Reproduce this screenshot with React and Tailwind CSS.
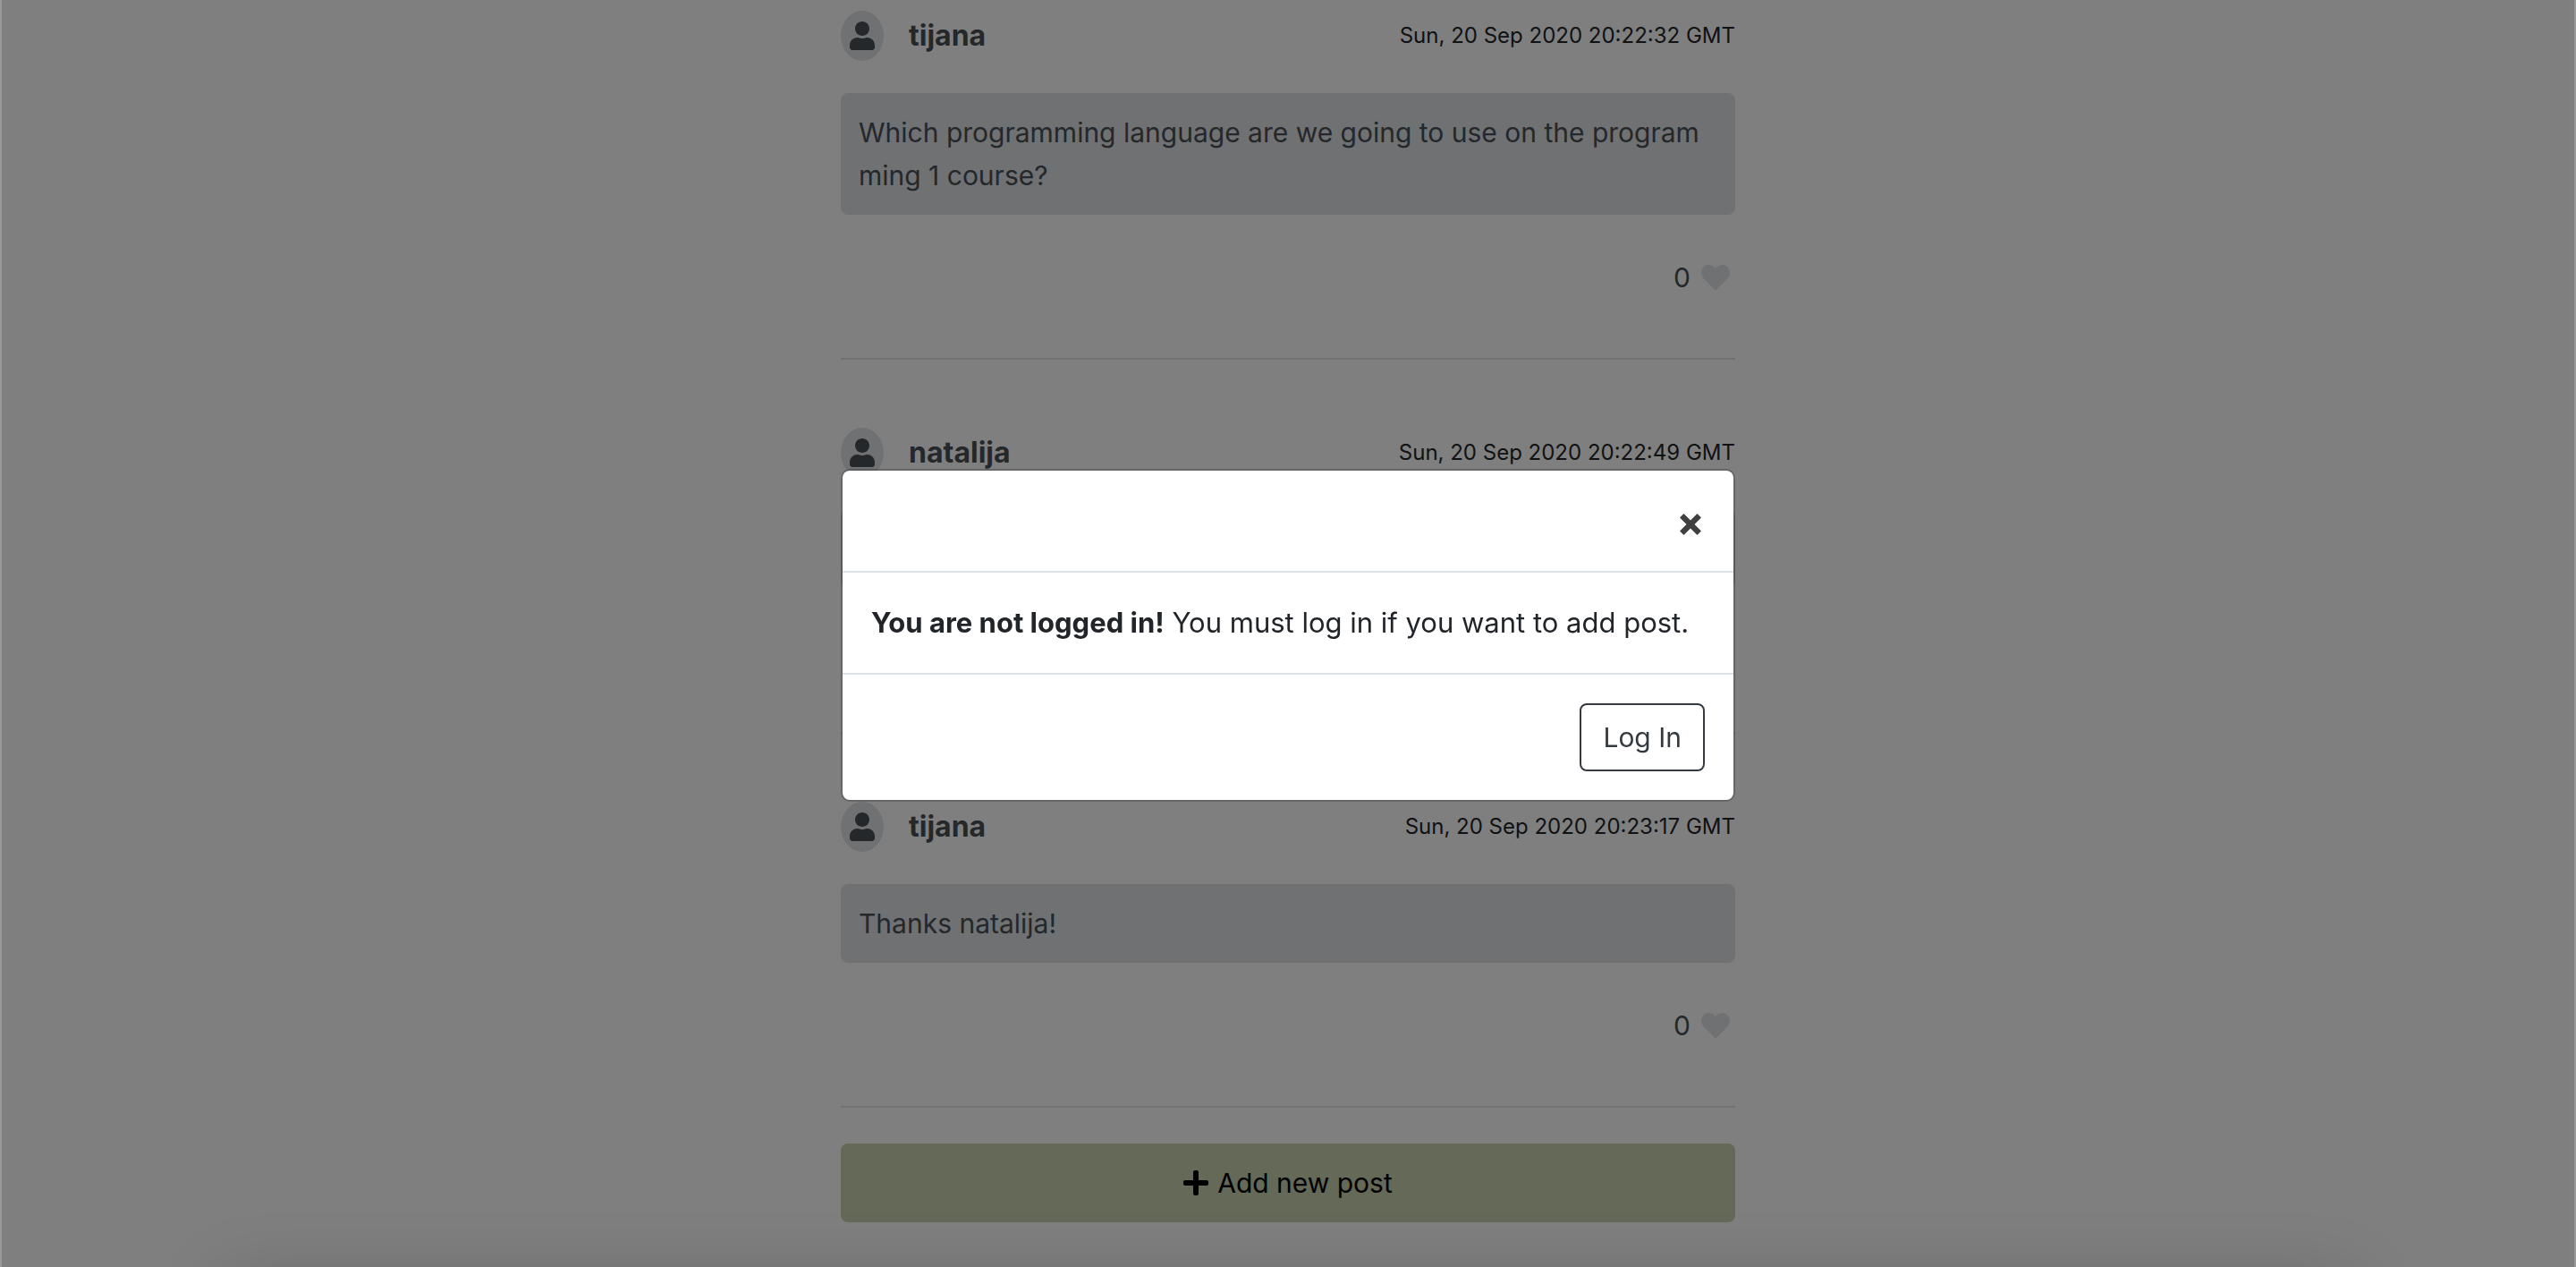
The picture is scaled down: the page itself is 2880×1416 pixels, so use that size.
import React from "react";
import { FaHeart, FaPlus, FaUser } from "react-icons/fa";

const posts = [
  {
    author: "tijana",
    date: "Sun, 20 Sep 2020 20:22:32 GMT",
    text: "Which programming language are we going to use on the programming 1 course?",
    likes: 0,
  },
  { author: "natalija", date: "Sun, 20 Sep 2020 20:22:49 GMT", text: "Python.", likes: 0 },
  { author: "tijana", date: "Sun, 20 Sep 2020 20:23:17 GMT", text: "Thanks natalija!", likes: 0 },
];

function Post({ author, date, text, likes }) {
  return (
    <article className="flex flex-col border-b-2 border-black/10 pb-[66px] text-[#495057]">
      <header className="flex items-center justify-between">
        <div className="flex items-center gap-7">
          <span className="flex h-14 w-12 items-center justify-center rounded-[50%] bg-[#dee2e6]">
            <FaUser size={32} className="w-7" />
          </span>
          <h2 className="text-[32px] leading-[48px] font-bold">{author}</h2>
        </div>
        <time className="text-2xl text-[#212529]">{date}</time>
      </header>
      <p className="mt-9 rounded-lg bg-[#dee2e6] p-5 break-all">{text}</p>
      <div className="mt-[46px] flex items-center justify-end gap-3 pr-1.5">
        <span>{likes}</span>
        <button type="button" aria-label="Like" className="text-[#dee2e6]">
          <FaHeart size={32} />
        </button>
      </div>
    </article>
  );
}

function LoginDialog() {
  return (
    <div className="fixed inset-0 flex items-center justify-center border-x-2 border-white/20 bg-black/50 pt-1">
      <section
        role="dialog"
        aria-modal="true"
        aria-label="Log in required"
        className="w-full max-w-[1000px] rounded-[10px] border-2 border-black/20 bg-white bg-clip-padding"
      >
        <header className="flex justify-end border-b-2 border-[#dee2e6] px-6 pt-9 pb-7">
          <button type="button" aria-label="Close" className="flex size-12 items-center justify-center text-[#404040]">
            <svg viewBox="0 0 24 24" className="size-6" fill="currentColor" aria-hidden="true">
              <path d="M4 .5Q4.500 0 5 .5L12 7.500 19 .5Q19.500 0 20 .5L23.500 4Q24 4.500 23.500 5L16.500 12 23.500 19Q24 19.500 23.500 20L20 23.500Q19.500 24 19 23.500L12 16.500 5 23.500Q4.500 24 4 23.500L.5 20Q0 19.500 .5 19L7.500 12 .5 5Q0 4.500 .5 4z" />
            </svg>
          </button>
        </header>
        <p className="p-8 text-[31px]">
          <strong className="font-bold">You are not logged in!</strong> You must log in if you want to add post.
        </p>
        <footer className="flex justify-end border-t-2 border-[#dee2e6] p-8">
          <button type="button" className="rounded-lg border-2 border-[#343a40] px-6 py-3 text-[#343a40]">
            Log In
          </button>
        </footer>
      </section>
    </div>
  );
}

export default function App() {
  return (
    <div className="min-h-screen overflow-hidden bg-white font-['Inter',sans-serif] text-[30px] leading-[48px] text-[#212529]">
      <main className="mx-auto flex max-w-[1000px] flex-col pt-3">
        <div className="flex flex-col gap-[76px]">
          {posts.map((post) => (
            <Post key={post.date} {...post} />
          ))}
        </div>
        <button
          type="button"
          className="mt-10 flex items-center justify-center gap-2.5 rounded-lg bg-[#cbd3af] p-5 text-black"
        >
          <FaPlus size={32} className="w-7" /> Add new post
        </button>
      </main>
      <LoginDialog />
      <div className="pointer-events-none fixed inset-x-[250px] -bottom-44 h-40 shadow-[0_0_80px_rgba(0,0,0,0.18)]" />
    </div>
  );
}
